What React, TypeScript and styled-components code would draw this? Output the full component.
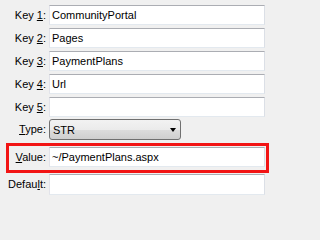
import React from 'react';
import styled, { createGlobalStyle } from 'styled-components';

const GlobalStyle = createGlobalStyle`
    html, body {
        margin: 0;
        padding: 0;
        background: #f0f0f0;
    }
    body {
        font-family: 'Liberation Sans', Arial, sans-serif;
        font-size: 11px;
        color: #000;
    }
`;

interface Row {
    text: string;
    key: string;
    value: string;
}

const keyRows: Row[] = [
    { text: 'Key ', key: '1', value: 'CommunityPortal' },
    { text: 'Key ', key: '2', value: 'Pages' },
    { text: 'Key ', key: '3', value: 'PaymentPlans' },
    { text: 'Key ', key: '4', value: 'Url' },
    { text: 'Key ', key: '5', value: '' },
];

const App: React.FC = () => {
    return (
        <>
            <GlobalStyle />
            <Form>
                {keyRows.map((row) => (
                    <FieldRow key={row.key}>
                        <Label width={46}>
                            {row.text}<u>{row.key}</u>:
                        </Label>
                        <TextBox>{row.value}</TextBox>
                    </FieldRow>
                ))}
                <FieldRow top={2}>
                    <Label width={46}>
                        <u>T</u>ype:
                    </Label>
                    <Combo>
                        <span>STR</span>
                        <Arrow />
                    </Combo>
                </FieldRow>
                <Highlight>
                    <Label width={37}>
                        <u>V</u>alue:
                    </Label>
                    <TextBox>~/PaymentPlans.aspx</TextBox>
                </Highlight>
                <FieldRow top={1}>
                    <Label width={46}>
                        Defau<u>l</u>t:
                    </Label>
                    <TextBox tall>{''}</TextBox>
                </FieldRow>
            </Form>
        </>
    );
};

const Form = styled.div`
    display: flex;
    flex-direction: column;
    padding-top: 5px;
    width: 270px;
    box-sizing: border-box;
`;

const FieldRow = styled.div<{ top?: number }>`
    display: flex;
    align-items: center;
    gap: 3px;
    padding-right: 5px;
    margin-top: ${({ top }) => (top !== undefined ? top : 3)}px;
    &:first-child {
        margin-top: 0;
    }
`;

const Label = styled.div<{ width: number }>`
    width: ${({ width }) => width}px;
    flex: none;
    text-align: right;
    white-space: nowrap;
    line-height: 13px;
    u {
        text-decoration-thickness: 1px;
        text-underline-offset: 1px;
    }
`;

const TextBox = styled.div<{ tall?: boolean }>`
    flex: 1;
    height: ${({ tall }) => (tall ? 21 : 20)}px;
    box-sizing: border-box;
    background: #fff;
    border-style: solid;
    border-width: 1px;
    border-color: #abadb3 #dbdfe6 #e3e9ef #e2e3ea;
    padding: 0 2px;
    display: flex;
    align-items: center;
    white-space: nowrap;
    overflow: hidden;
`;

const Combo = styled.div`
    width: 132px;
    height: 21px;
    box-sizing: border-box;
    border: 1px solid #707070;
    border-radius: 3px;
    background: linear-gradient(#f2f2f2 0%, #ebebeb 50%, #dddddd 51%, #cfcfcf 100%);
    display: flex;
    align-items: center;
    justify-content: space-between;
    padding: 0 4px 0 3px;
`;

const Arrow = styled.div`
    width: 0;
    height: 0;
    border-left: 3.5px solid transparent;
    border-right: 3.5px solid transparent;
    border-top: 4px solid #000;
    margin-top: 1px;
`;

const Highlight = styled.div`
    display: flex;
    align-items: flex-start;
    gap: 3px;
    margin: 3px 1px 0 6px;
    height: 30px;
    box-sizing: border-box;
    border: 3px solid #f21414;
    padding: 1px 1px 0 0;
    ${Label} {
        margin-top: 4px;
    }
`;

export default App;
